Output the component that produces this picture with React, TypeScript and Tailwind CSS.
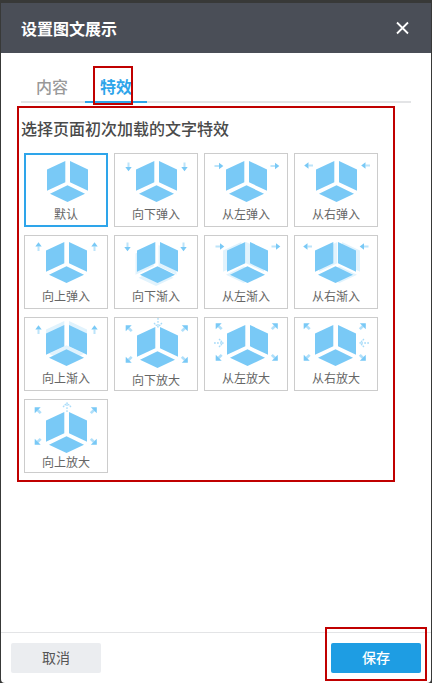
import { useState } from "react";

type Direction = "up" | "down" | "left" | "right";
type Point = [number, number];

interface Effect {
  name: string;
  cube: Point;
  ghost?: Point;
  arrows?: { dir: Direction; at: Point[] };
  corners?: Point;
  dotted?: { dir: Direction; at: Point };
  tall?: boolean;
}

const ROTATION: Record<Direction, number> = { right: 0, down: 90, left: 180, up: 270 };

const effects: Effect[] = [
  { name: "默认", cube: [1, 0] },
  { name: "向下弹入", cube: [0, 0], arrows: { dir: "down", at: [[14.5, 14], [70.5, 14]] } },
  { name: "从左弹入", cube: [0, 0], arrows: { dir: "right", at: [[15, 13], [71, 13]] } },
  { name: "从右弹入", cube: [0, 0], arrows: { dir: "left", at: [[14.5, 12.5], [71.5, 12.5]] } },
  { name: "向上弹入", cube: [0, -1], arrows: { dir: "up", at: [[14.5, 11.5], [70.5, 11.5]] } },
  { name: "向下渐入", cube: [1, -1], ghost: [-1.5, 3], arrows: { dir: "down", at: [[13.5, 12], [69.5, 12]] } },
  { name: "从左渐入", cube: [1, -1], ghost: [-4, 0], arrows: { dir: "right", at: [[16, 11.5], [72, 11.5]] } },
  { name: "从右渐入", cube: [-1, -1], ghost: [4, 0], arrows: { dir: "left", at: [[13.5, 11.5], [70, 11.5]] } },
  { name: "向上渐入", cube: [0, 0], ghost: [0, -4], arrows: { dir: "up", at: [[14.5, 12.5], [70.5, 12.5]] } },
  { name: "向下放大", cube: [1, 2], corners: [43, 27], dotted: { dir: "down", at: [44, 6] }, tall: true },
  { name: "从左放大", cube: [1, 0], corners: [43, 25], dotted: { dir: "right", at: [15, 26] } },
  { name: "从右放大", cube: [-1, 0], corners: [41, 25], dotted: { dir: "left", at: [70, 26] } },
  { name: "向上放大", cube: [0, 5], corners: [42, 27], dotted: { dir: "up", at: [43, 8] }, tall: true },
];

function Cube() {
  return (
    <>
      <path d="M22 16.5 40.3 8v21.3L22 37.8z" />
      <path d="M45 8l18 8.5v21.3l-18-8.5z" />
      <path d="M42.5 32.3 60 40.7 42.5 49 25 40.7z" />
    </>
  );
}

function EffectIcon({ effect }: { effect: Effect }) {
  const { cube, ghost, arrows, corners, dotted, tall } = effect;
  return (
    <svg
      width="82"
      height={tall ? 54 : 52}
      viewBox={tall ? "1 1 82 54" : "1 1 82 52"}
      fill="#79c9f6"
      aria-hidden="true"
    >
      {ghost && (
        <g transform={`translate(${cube[0] + ghost[0]} ${cube[1] + ghost[1]})`} fill="#e1f3fd">
          <Cube />
        </g>
      )}
      <g transform={`translate(${cube[0]} ${cube[1]})`}>
        <Cube />
      </g>
      {arrows?.at.map(([x, y]) => (
        <g key={x} transform={`translate(${x} ${y}) rotate(${ROTATION[arrows.dir]})`}>
          <path d="M-4.5-1H0V1H-4.5z" opacity=".5" />
          <path d="M0-3.2 4.3 0 0 3.2z" />
        </g>
      ))}
      {corners &&
        [[-28.5, -16, 225], [28, -16, 315], [-28.5, 16, 135], [28, 16, 45]].map(([x, y, angle]) => (
          <g key={angle} transform={`translate(${corners[0] + x} ${corners[1] + y}) rotate(${angle})`}>
            <path d="M-4.5-1.3H0V1.3H-4.5z" opacity=".6" />
            <path d="M-.3-4.2 4 0-.3 4.2z" />
          </g>
        ))}
      {dotted && (
        <g
          transform={`translate(${dotted.at[0]} ${dotted.at[1]}) rotate(${ROTATION[dotted.dir]})`}
          fill="none"
          stroke="#a9dcf9"
          strokeWidth="1.3"
        >
          <path d="M-5 0H4" strokeDasharray="1.8 1.2" />
          <path d="M0-4 4 0 0 4" strokeDasharray="1.8 .6" />
        </g>
      )}
    </svg>
  );
}

export default function App() {
  const [selected, setSelected] = useState("默认");
  return (
    <div className="flex min-h-screen flex-col bg-[#383938] px-px pt-[3px] font-['Noto_Sans_CJK_SC',sans-serif]">
      <div className="flex flex-1 flex-col rounded-b-sm bg-white">
        <header className="flex h-[50px] items-center justify-between bg-[#4a4e57] px-5">
          <h1 className="text-base leading-5 font-bold text-white">设置图文展示</h1>
          <button type="button" aria-label="关闭" className="text-white">
            <svg width="16" height="16" viewBox="0 0 16 16" fill="none" stroke="currentColor" strokeWidth="1.8">
              <path d="M2 2.5 13 13.5M13 2.5 2 13.5" />
            </svg>
          </button>
        </header>

        <main className="flex-1">
          <div role="tablist" className="mx-5 mt-[18px] flex h-8 gap-0.5 shadow-[inset_0_-2px_0_#e3e4e6]">
            <button type="button" role="tab" aria-selected="false" className="px-[15px] pb-0.5 text-base font-medium text-[#999]">
              内容
            </button>
            <button
              type="button"
              role="tab"
              aria-selected="true"
              className="relative border-b-2 border-[#2ea5ea] px-[15px] text-base font-bold text-[#2ea5ea]"
            >
              特效
              <span className="pointer-events-none absolute -top-[5px] -bottom-1 left-2 w-10 border-2 border-[#c00000]" />
            </button>
          </div>

          <section className="mt-[3px] mr-9 ml-4 border-2 border-[#c00000] pt-2.5 pb-[7px]">
            <h2 id="effects-title" className="ml-0.5 text-base leading-5 font-medium text-[#4a4a4a]">
              选择页面初次加载的文字特效
            </h2>
            <div role="radiogroup" aria-labelledby="effects-title" className="mt-[15px] ml-[5px] flex flex-wrap gap-x-1.5 gap-y-2">
              {effects.map((effect) => (
                <label
                  key={effect.name}
                  className={`relative flex h-[74px] w-[84px] cursor-pointer flex-col items-center border text-xs leading-4 text-[#666] ${
                    selected === effect.name ? "border-[#2ea5ea] ring-1 ring-[#2ea5ea] ring-inset" : "border-[#ccc]"
                  }`}
                >
                  <input
                    type="radio"
                    name="effect"
                    className="sr-only"
                    checked={selected === effect.name}
                    onChange={() => setSelected(effect.name)}
                  />
                  <EffectIcon effect={effect} />
                  {effect.name}
                </label>
              ))}
            </div>
          </section>
        </main>

        <footer className="flex justify-between border-t border-[#e3e4e6] p-2.5 text-sm">
          <button type="button" className="h-[30px] w-[90px] rounded-xs bg-[#ebedf0] pb-0.5 text-[#555]">
            取消
          </button>
          <button type="button" className="relative h-[30px] w-[90px] rounded-xs bg-[#1e9de3] pb-0.5 font-medium text-white">
            保存
            <span className="pointer-events-none absolute -inset-x-1.5 -top-4 -bottom-2 border-2 border-[#c00000]" />
          </button>
        </footer>
      </div>
    </div>
  );
}
